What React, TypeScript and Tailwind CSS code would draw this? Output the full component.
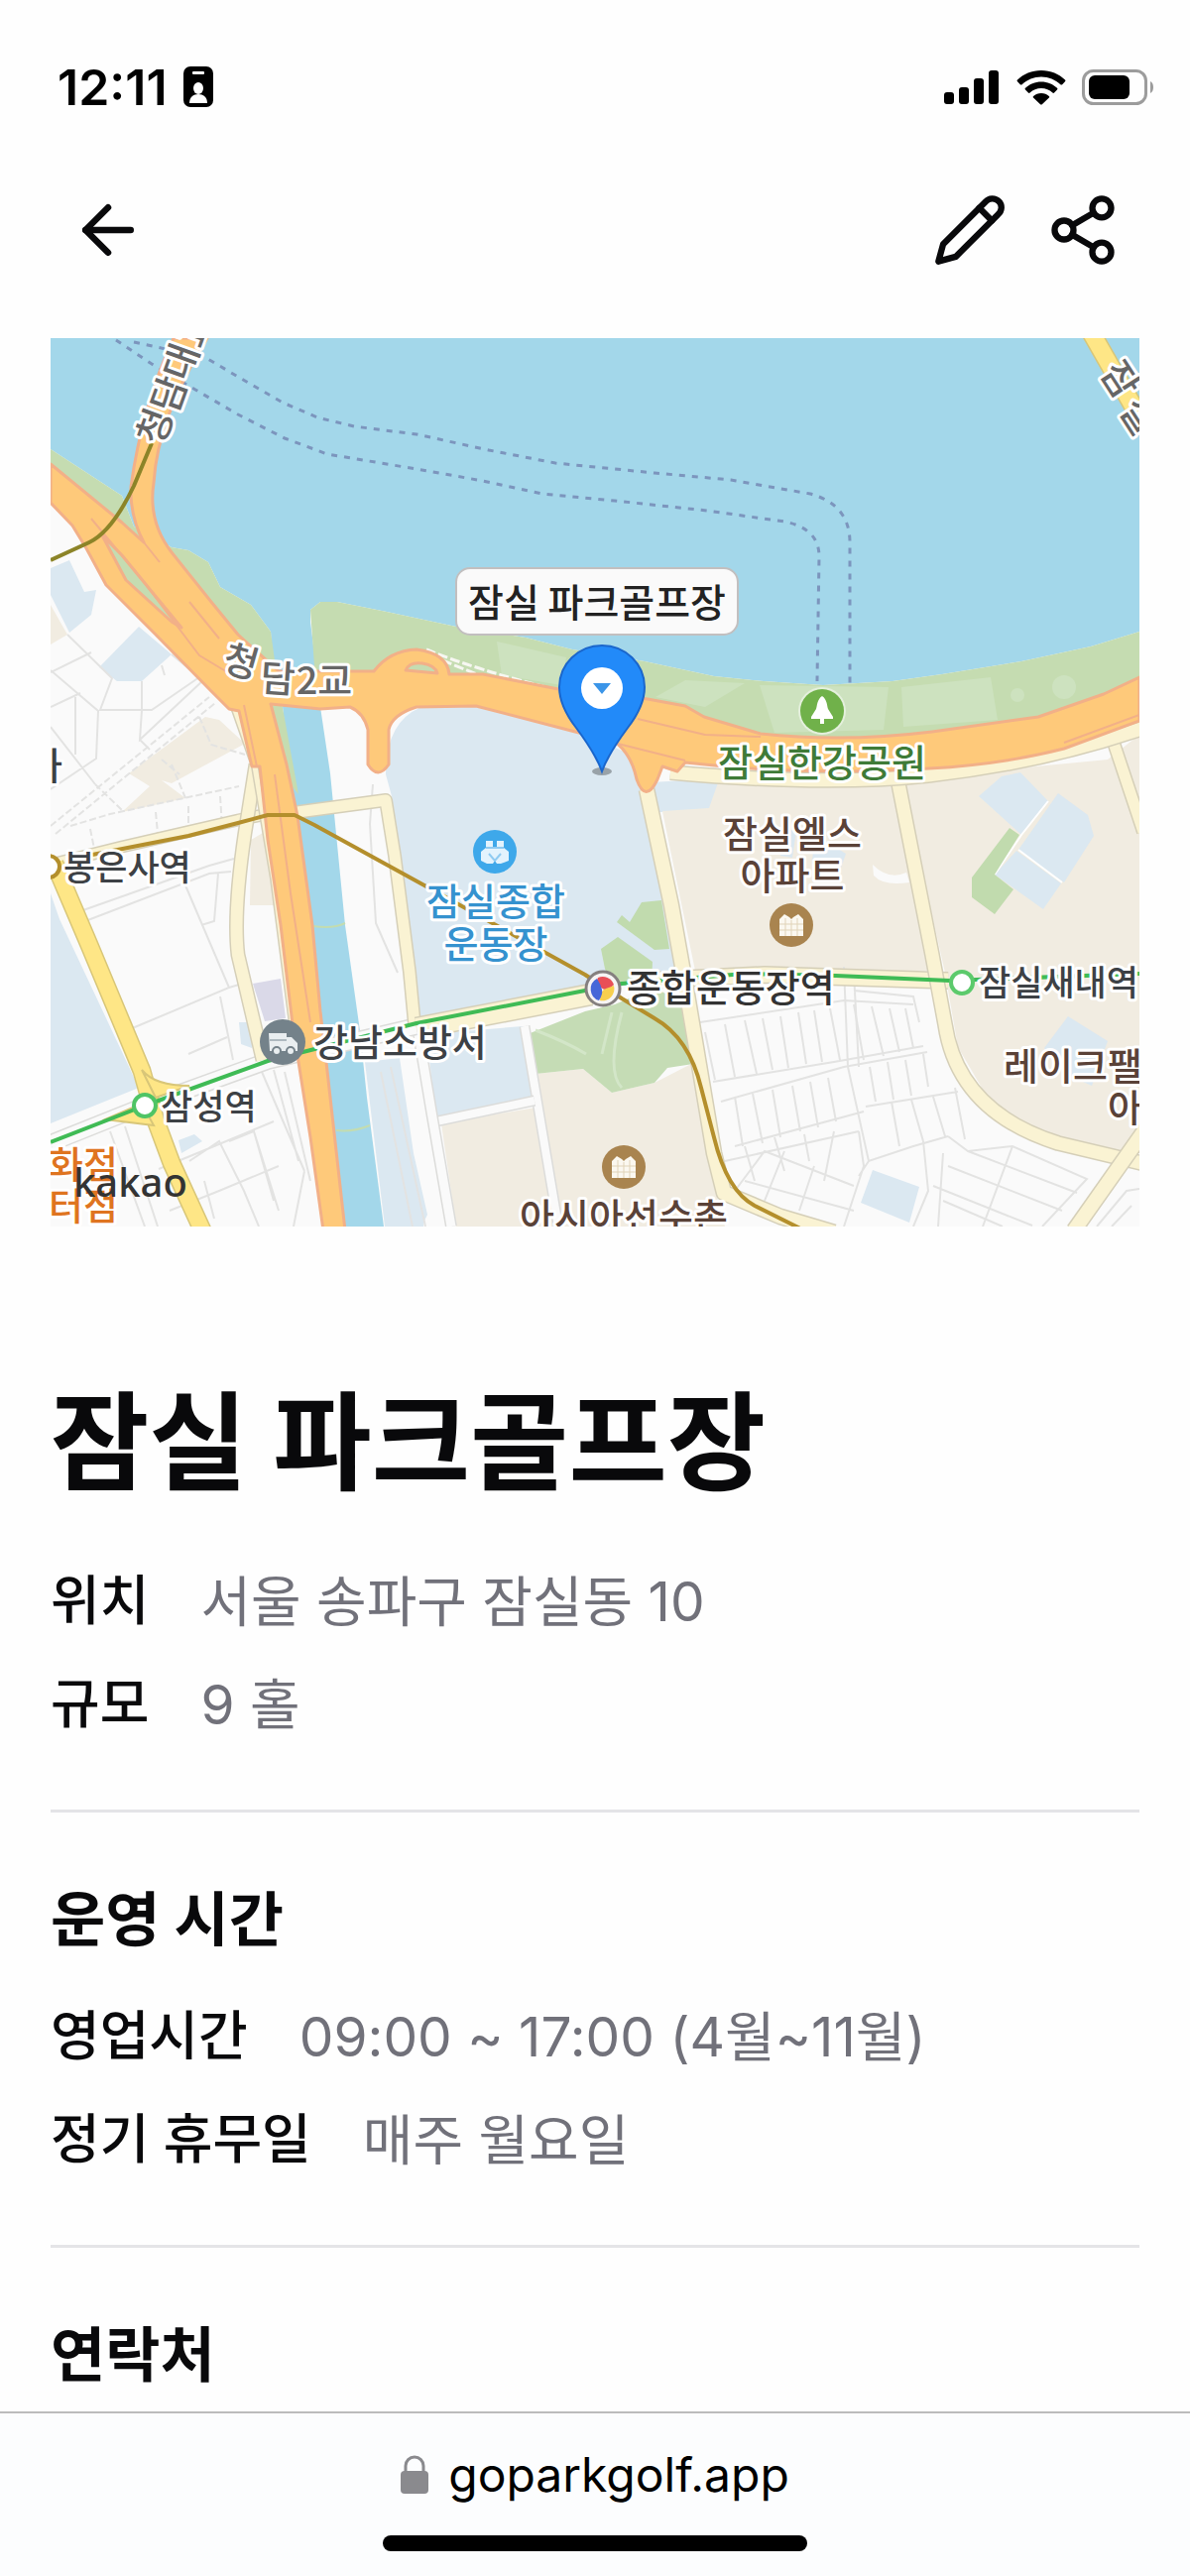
import React from 'react';
import { ArrowLeft, Pencil, Share2 } from 'lucide-react';

type InfoItem = { label: string; value: string };

type LabelProps = {
  x: number;
  y: number;
  size?: number;
  color?: string;
  anchor?: 'start' | 'middle' | 'end';
  rotate?: number;
  children: string;
};

const basicInfo: InfoItem[] = [
  { label: '위치', value: '서울 송파구 잠실동 10' },
  { label: '규모', value: '9 홀' },
];

const hoursInfo: InfoItem[] = [
  { label: '영업시간', value: '09:00 ~ 17:00 (4월~11월)' },
  { label: '정기 휴무일', value: '매주 월요일' },
];

const StatusBar: React.FC = () => (
  <div className="flex items-center justify-between pt-[58px] pl-[58px] pr-[34px]">
    <div className="flex items-center gap-4">
      <span className="text-[50px] leading-[60px] font-semibold text-black">12:11</span>
      <svg width="30" height="42" viewBox="0 0 30 42" aria-hidden="true">
        <rect width="30" height="41" rx="7" fill="#000" />
        <rect x="9" y="5" width="12" height="3" rx="1" fill="#fff" />
        <ellipse cx="15" cy="22" rx="5" ry="6" fill="#fff" />
        <path d="M6 37c0-6 4-9 9-9s9 3 9 9z" fill="#fff" />
      </svg>
    </div>
    <div className="flex items-center gap-4">
      <svg width="58" height="36" viewBox="0 0 58 36" aria-hidden="true">
        <rect x="1" y="23" width="10" height="12" rx="3" />
        <rect x="16" y="18" width="10" height="17" rx="3" />
        <rect x="31" y="9" width="10" height="26" rx="3" />
        <rect x="46" y="1" width="10" height="34" rx="3" />
      </svg>
      <svg width="50" height="36" viewBox="0 0 50 36" aria-hidden="true">
        <path d="M25 1C15.500 1 7 4.700 1 10.500c-.6.6-.6 1.200 0 1.800l2.800 2.900c.5.5 1.200.5 1.800 0C10.800 10.400 17.500 7.500 25 7.500s14.200 2.900 19.400 7.700c.6.500 1.300.5 1.800 0l2.800-2.900c.6-.6.6-1.200 0-1.800C43 4.700 34.500 1 25 1z" />
        <path d="M25 12.500c-6.200 0-11.900 2.400-16 6.300-.6.6-.6 1.200 0 1.800l2.900 2.900c.5.500 1.200.5 1.700 0 3-2.800 7-4.500 11.400-4.500s8.400 1.700 11.400 4.500c.5.5 1.200.5 1.700 0l2.900-2.900c.6-.6.6-1.200 0-1.800-4.100-3.900-9.800-6.300-16-6.300z" />
        <path d="M25 24c-3.100 0-5.800 1.100-7.900 2.900-.6.500-.6 1.200-.1 1.700l7.100 6.600c.5.5 1.200.5 1.700 0l7.100-6.600c.5-.5.5-1.200-.1-1.700C30.800 25.100 28.100 24 25 24z" />
      </svg>
      <svg width="75" height="38" viewBox="0 0 75 38" aria-hidden="true">
        <rect x="1.500" y="2.500" width="63" height="33" rx="10" fill="none" stroke="#9c9c9c" strokeWidth="3" />
        <rect x="7" y="7" width="41" height="24" rx="6" />
        <path d="M69 13c4 1.500 4 10.500 0 12z" fill="#9c9c9c" />
      </svg>
    </div>
  </div>
);

const Header: React.FC = () => (
  <header className="flex items-center justify-between px-[70px] pt-[75px] pb-[70px] text-[#09090b]">
    <button type="button" aria-label="뒤로 가기">
      <ArrowLeft size={78} strokeWidth={2} />
    </button>
    <div className="flex gap-[38px]">
      <button type="button" aria-label="수정">
        <svg
          width="76"
          height="78"
          viewBox="0 0 24 24"
          fill="none"
          stroke="currentColor"
          strokeWidth="2"
          strokeLinecap="round"
          strokeLinejoin="round"
        >
          <path d="M17 3a2.850 2.830 0 1 1 4 4L7.500 20.500 2 22l1.500-5.500Z" />
          <path d="m15 5 4 4" />
        </svg>
      </button>
      <button type="button" aria-label="공유">
        <Share2 size={76} strokeWidth={2} />
      </button>
    </div>
  </header>
);

const MapLabel: React.FC<LabelProps> = ({
  x,
  y,
  size = 38,
  color = '#3d4145',
  anchor = 'start',
  rotate = 0,
  children,
}) => (
  <text
    x={x}
    y={y}
    fontSize={size}
    fill={color}
    textAnchor={anchor}
    stroke="#fff"
    strokeWidth="6"
    strokeLinejoin="round"
    paintOrder="stroke"
    transform={rotate ? `rotate(${rotate} ${x} ${y - 13})` : undefined}
  >
    {children}
  </text>
);

// a road is its darker casing with the fill colour on top
const Road: React.FC<{ d: string; width: number; fill: string; edge: string }> = ({ d, width, fill, edge }) => (
  <g fill="none" strokeLinejoin="round">
    <path d={d} stroke={edge} strokeWidth={width + 3} />
    <path d={d} stroke={fill} strokeWidth={width} />
  </g>
);

const ApartmentIcon: React.FC<{ x: number; y: number }> = ({ x, y }) => (
  <g transform={`translate(${x} ${y})`}>
    <circle r="22" fill="#a9844f" />
    <path d="M-12-6l5-5 5 3 2 2 2-2 5-3 5 5v17h-24z" fill="#fbf8f0" />
    <path d="M0-5v16M-12-1h24M-12 5h24M-6-7v18M6-7v18" stroke="#e0d3b8" strokeWidth="1" />
  </g>
);

const cream = { fill: '#faf3d3', edge: '#d5cfb8' };
const white = { fill: '#fafafa', edge: '#dcdcda' };
const yellow = { fill: '#fee686', edge: '#d8c678' };

const CourseMap: React.FC = () => (
  <svg
    viewBox="0 0 1098 896"
    className="block h-auto w-full font-['Noto_Sans_CJK_KR',sans-serif] font-medium"
    role="img"
    aria-label="잠실 파크골프장 지도"
  >
    <rect width="1098" height="896" fill="#fafafa" />

    {/* blocks */}
    <g fill="#dbe8f1">
      <path d="M338 440Q338 382 380 370L429 368 529 395 585 420 602 460 644 645 540 658 370 690 344 462Z" />
      <path d="M379 702L476 694 486 766 389 786Z" />
      <path d="M317 730L352 726 366 822 380 884 374 896H337Z" />
      <path d="M606 448L676 444 666 478 612 478Z" />
      <path d="M0 232L19 224 34 256 46 254 41 279 19 297 0 259Z" />
      <path d="M89 291L122 319 92 346H67L49 332Z" />
      <path d="M0 560L9 586 89 756 0 792Z" />
      <path d="M190 690H203V716L192 712Z" />
      <path d="M129 809L145 803 153 810 132 822Z" />
      <path d="M829 839L876 856 866 892 817 872Z" />
      <path d="M369 858L378 876 376 896H369Z" />
    </g>
    <g fill="#f1ece1">
      <path d="M394 792L489 776 506 869V896H409Z" />
      <path d="M489 742L537 737 566 761 609 751 646 732 671 862 680 896H512Z" />
      <path d="M617 477L664 474 676 440 850 445 892 638H650Z" />
      <path d="M858 445L1066 425 1098 400V805L1080 820 1010 812 950 775 915 715 902 640Z" />
      <path d="M0 269L17 299 0 309Z" />
      <path d="M79 439L156 382 170 385 196 409 122 449 112 446 136 464 72 478 100 452Z" />
      <path d="M202 506L214 499 230 572H201Z" />
    </g>
    <g fill="#dbe8f1">
      <path d="M959 442L978 438 1006 467 979 501 936 462Z" />
      <path d="M1016 459L1046 481 1052 502 1022 549 976 516Z" />
      <path d="M974 517L1019 550 1001 576 952 541Z" />
      <path d="M1026 684L1066 709 1050 754 1030 745 1002 716Z" />
      <path d="M770 500L802 520 795 540 768 530ZM738 495L752 497 748 524 736 522Z" />
    </g>
    <path d="M979 501L1006 467M976 516L1020 549M979 501L952 541" stroke="#fff" strokeWidth="2" />
    <path d="M829 531Q845 547 863 539L866 549Q840 553 830 542Z" fill="#fafafa" />
    <path d="M204 651L232 646 237 686 216 689Z" fill="#dad9e8" />
    <path d="M967 494L977 501 952 541 971 556 952 581 929 564V544Z" fill="#c1dbae" />

    {/* small streets */}
    <g fill="none" stroke="#e3e3e2" strokeWidth="2">
      <path d="M17 299L62 343 50 375 102 375 150 342 122 319M0 337L41 317M0 335L48 376 46 424 0 455M25 362V420M92 346V375L90 405 170 330M90 405L100 415M0 392L45 450M0 372L30 358M112 330L115 340M150 342L170 355" />
      <path d="M0 492L160 362M5 500L166 368M150 382L162 410 196 420M122 430L136 464M20 492L60 480 190 452M45 450L72 476M106 478L109 510M139 472V500M171 462L173 492M40 495L45 520M112 425L130 440" strokeDasharray="7 3" />
      <path d="M30 578L160 532 185 525M35 588L160 540 182 538M169 540L165 588 152 592M136 552L180 655 80 697M171 664L184 728M139 722L178 705M180 655L190 652" />
      <path d="M60 800L95 896M75 795L108 896M109 838L165 815 225 790M140 830L170 810 195 860 210 896M180 810L205 800 225 870M120 880L170 860 230 835M155 850L165 888M205 800L230 880" />
      <path d="M213 740L256 840M225 738L250 830M236 740L262 850M256 840L245 896M325 450L322 490 328 590 350 640M333 740L365 896M343 735L378 896" />
      <path d="M655 690L800 668 870 672M668 750L790 730 880 714M676 770L800 735 884 720M660 700L670 748M680 692L690 745M700 688L712 742M718 686L728 738M736 684L744 736M754 680L762 732M770 678L778 730M786 676L796 728M800 634L804 735M810 672L820 728M828 674L840 724M846 676L856 720M862 676L870 716" />
      <path d="M800 640H810L815 735M810 658L870 664 876 690M690 765L698 815M708 762L718 812M728 758L736 806M748 754L756 800M766 750L774 796M784 746L792 790M690 815L820 780M822 775L915 760M804 735L825 830 870 815 905 805M826 735L832 770M844 730L850 768M862 728L868 764M880 722L885 755M848 770L856 815M868 768L880 810M890 765L902 805M912 756L922 808" />
      <path d="M680 830L815 800M700 815L710 850M730 806L740 840M760 803L765 830M790 800L780 850M815 800L820 835 800 896M700 850L810 880M740 820L720 870M770 835L755 880M690 860L720 820 810 855M825 830L815 845M880 810L885 860 870 896M905 805L925 820 970 815 1045 848 1000 896M905 835L1020 880M890 855L990 895M900 822L895 896M970 815L940 896M925 820L1035 862M900 870L960 896M1055 896L1085 860 1098 858M1070 896L1090 875" />
    </g>

    {/* parks */}
    <g fill="#c1dbae">
      <path d="M596 569L616 567 624 616 609 617 571 589 576 582 584 589Z" />
      <path d="M572 604L607 629 606 650 565 650 559 636 555 616Z" />
    </g>
    <path d="M481 702L539 679 569 672 609 655 640 672 648 732 622 736 609 751 566 761 537 737 489 742Z" fill="#c5dcb5" />
    <path d="M489 698Q520 710 540 722M566 680L556 722M576 680Q560 740 576 756" stroke="#d3e6c8" strokeWidth="3" fill="none" />

    {/* river and the stream */}
    <path
      d="M0 0H1098V296L1049 311 979 326 899 339 849 346 779 350 719 346 669 341 599 326 526 314 479 302 409 291 339 276 289 266 272 266 262 274V286L267 326 272 372 282 439 297 592 312 699 319 766 336 896H290L270 700 234 372 225 340 222 296 202 269 171 251 159 226 139 214 122 211 84 190 72 159 0 112Z"
      fill="#a3d7ea"
    />
    <path d="M265 593Q285 596 297 590M288 799Q305 801 322 794" stroke="#c3dcb0" strokeWidth="2" fill="none" />
    <path
      d="M262 274L272 266H289L339 276 409 291 479 302 526 314 599 326 669 341 719 346 779 350 849 346 899 339 979 326 1049 311 1098 296V360L900 410 700 405 500 360 267 345Z"
      fill="#c5dcb1"
    />
    <g fill="#cde2bf">
      <path d="M450 306L520 322 515 350 455 340ZM640 345L700 348 660 372 610 362ZM715 350L845 352 840 395 730 398ZM858 352L948 342 955 385 860 392Z" />
      <circle cx="1022" cy="352" r="12" />
      <circle cx="975" cy="360" r="7" />
    </g>
    <path d="M379 314Q430 335 512 355M395 325L430 339" stroke="#f7f7f2" strokeWidth="3" strokeDasharray="10 3" fill="none" />
    <path d="M0 112L72 159 84 190 122 211 139 214 159 226 171 251 202 269 222 296 228 340 250 460 200 400 140 320 30 160 0 140Z" fill="#c5dcb1" />
    <path d="M279 739L297 896H290L272 760Z" fill="#c5dcb1" />

    {/* ferry routes */}
    <g fill="none" stroke="#7c95bd" strokeWidth="3" strokeDasharray="6 7">
      <path d="M84 4L157 20 189 39 234 65 269 80 306 89 369 97 442 113 509 126 609 136 686 143 766 157Q806 168 806 206V352" />
      <path d="M66 2L102 26 146 52 189 77 236 101 279 117 369 132 436 144 496 157 569 164 662 174 740 185Q775 192 775 220L773 346" />
    </g>

    {/* local roads */}
    <Road d="M478 694L512 896" width={8} {...white} />
    <Road d="M389 790L488 769" width={8} {...white} />
    <Road d="M370 696L384 780 404 896" width={9} {...white} />
    <Road d="M0 812L95 774 219 729 369 694" width={15} {...white} />
    <Road d="M0 531L72 513 189 486 219 480" width={10} {...cream} />
    <Road d="M207 430L196 499Q184 580 189 622L214 728" width={12} {...cream} />
    <Road d="M186 375L206 432 225 545 245 700" width={5} {...cream} />
    <Road d="M249 478L338 466 347 522 362 639 367 692" width={11} {...cream} />
    <Road d="M369 696L545 662" width={20} {...cream} />
    <Road d="M600 648L720 642 905 648" width={15} {...cream} />
    <Road d="M854 444L889 622 902 692Q915 780 1016 812L1100 832" width={13} {...cream} />
    <Road d="M1104 798L1032 900" width={14} {...cream} />
    <Road d="M1072 408L1102 498" width={11} {...cream} />
    <Road d="M601 455L626 572 641 656 669 822 679 862 736 886 790 902" width={14} {...cream} />
    <Road d="M625 438Q780 452 885 441 1000 428 1100 394" width={13} {...cream} />
    <Road d="M4 530L39 612 92 739 106 789 122 832 155 904" width={16} {...yellow} />
    <path d="M92 738Q105 754 140 754L106 766ZM55 788L104 794 92 772Z" fill="#fee686" stroke="#d8c678" strokeWidth="2" />
    <Road d="M1048 -8L1104 90" width={17} {...yellow} />

    {/* expressways */}
    <g fill="#fec97a" stroke="#f2b088" strokeWidth="3" strokeLinejoin="round">
      <path d="M124 0Q92 70 81 150 80 180 94 206L72 186 39 159 0 127V166L22 189 36 212 56 249 106 299 162 356 180 374 190 376 203 432H211L219 506 232 592 244 692 262 806 275 900H297L279 739 272 679 264 592 249 482 238 430 222 369 272 374 302 372Q316 378 320 395V430Q330 446 341 430V395Q344 380 369 372L429 371 529 397 569 407Q586 420 591 445 600 470 612 445L617 432 632 437 640 428Q760 442 886 434 960 430 1022 414L1098 386V342L1062 359 996 382 889 397Q800 408 716 399L659 382 640 371 602 364 512 354 436 339H402Q400 318 369 314 342 315 326 336L230 336 189 299 162 266 122 216Q98 185 104 146 108 80 158 0Z" />
      <path d="M358 335Q362 326 375 328 388 330 390 338Z" fill="#c5dcb1" />
      <path d="M52 199L72 219 99 252 132 292 122 286 76 244Z" fill="#c5dcb1" />
      <path
        d="M41 182L94 246 150 320 180 338M140 266L170 303M94 206L110 226M195 370L208 432M226 440L242 560 262 690M592 384L660 400 716 402M560 406L640 426M1098 380L1022 408"
        fill="none"
        strokeWidth="2"
      />
    </g>

    {/* subway lines */}
    <g fill="none" strokeLinejoin="round">
      <path d="M102 106L84 149Q62 195 39 206L0 224" stroke="#8c8428" strokeWidth="4" />
      <path
        d="M42 521L139 502 189 489 219 481H246L266 491 377 552 539 642 576 666 609 686Q644 706 656 756L669 806Q682 860 710 875L756 898"
        stroke="#b48f2c"
        strokeWidth="4"
      />
      <path d="M0 811L95 774 219 729 369 691 539 658 576 651 700 641 792 643 907 648 1098 641" stroke="#3fbb55" strokeWidth="4" />
      <circle cx="95" cy="774" r="11" fill="#fff" stroke="#4fc465" strokeWidth="4" />
      <circle cx="919" cy="650" r="11" fill="#fff" stroke="#5cca6c" strokeWidth="4" />
      <circle cx="-2" cy="533" r="11" fill="#fff" stroke="#b48f2c" strokeWidth="4" />
    </g>
    <g transform="translate(557 656)">
      <circle r="17" fill="#f6f4f4" stroke="#85807f" strokeWidth="3" />
      <path d="M-5-11A12 12 0 0 1 11-4Q4 4-2-1T-5-11Z" fill="#e84f57" />
      <path d="M11-3A12 12 0 0 1-3 12Q-3 2 3 0T11-3Z" fill="#f8cf4e" />
      <path d="M-6-10A12 12 0 0 0-4 12Q0 6-1 1T-6-10Z" fill="#4667d8" />
    </g>

    {/* place icons */}
    <g transform="translate(778 376)">
      <circle r="24" fill="#e4f0dc" />
      <circle r="22" fill="#70b14a" />
      <path d="M0-15c5 3 5 10 6 13l5 8v2H2v5h-4V8h-9V6l5-8c1-3 1-10 6-13z" fill="#fff" />
    </g>
    <g transform="translate(448 518)">
      <circle r="22" fill="#3ea8ea" />
      <path d="M-9-11h7v7h4v-7h7v7l5 4v9l-8 3H2l-2-3-2 3h-6l-6-3V0l5-4z" fill="#e3f3fd" />
      <path d="M-9-4H9M-6 2L0 9 6 2" stroke="#8fcbf2" strokeWidth="2" fill="none" />
    </g>
    <g transform="translate(234 710)">
      <circle r="23" fill="#74828a" />
      <path d="M-14-9H4v4h5l6 6v8h-28z" fill="#e9eef0" />
      <circle cx="-6" cy="9" r="4" fill="#e9eef0" stroke="#74828a" strokeWidth="2" />
      <circle cx="8" cy="9" r="4" fill="#e9eef0" stroke="#74828a" strokeWidth="2" />
      <path d="M-13-2H4" stroke="#aeb9bf" strokeWidth="2" />
    </g>
    <ApartmentIcon x={747} y={592} />
    <ApartmentIcon x={578} y={836} />

    {/* place names */}
    <MapLabel x={106} y={102} color="#666" anchor="middle" rotate={-70}>청</MapLabel>
    <MapLabel x={120} y={70} color="#666" anchor="middle" rotate={-70}>담</MapLabel>
    <MapLabel x={132} y={37} color="#666" anchor="middle" rotate={-70}>대</MapLabel>
    <MapLabel x={146} y={4} color="#666" anchor="middle" rotate={-70}>교</MapLabel>
    <MapLabel x={1078} y={55} color="#666" anchor="middle" rotate={57}>잠</MapLabel>
    <MapLabel x={1097} y={92} color="#666" anchor="middle" rotate={57}>실</MapLabel>
    <MapLabel x={192} y={340} color="#666" anchor="middle" rotate={16}>청</MapLabel>
    <MapLabel x={229} y={357} color="#666" anchor="middle" rotate={4}>담</MapLabel>
    <MapLabel x={276} y={359} color="#666" anchor="middle">2교</MapLabel>
    <MapLabel x={12} y={445} anchor="end">사</MapLabel>
    <MapLabel x={13} y={547} size={35}>봉은사역</MapLabel>
    <MapLabel x={265} y={724}>강남소방서</MapLabel>
    <MapLabel x={111} y={788} size={35}>삼성역</MapLabel>
    <MapLabel x={68} y={847} color="#df7420" anchor="end">화점</MapLabel>
    <MapLabel x={68} y={889} color="#df7420" anchor="end">터점</MapLabel>
    <MapLabel x={449} y={582} color="#3592cf" anchor="middle">잠실종합</MapLabel>
    <MapLabel x={449} y={625} color="#3592cf" anchor="middle">운동장</MapLabel>
    <MapLabel x={581} y={669} color="#333">종합운동장역</MapLabel>
    <MapLabel x={936} y={663} size={35}>잠실새내역</MapLabel>
    <MapLabel x={778} y={442} color="#3f7b38" anchor="middle">잠실한강공원</MapLabel>
    <MapLabel x={748} y={514} color="#5a4238" anchor="middle">잠실엘스</MapLabel>
    <MapLabel x={748} y={556} color="#5a4238" anchor="middle">아파트</MapLabel>
    <MapLabel x={961} y={748} color="#5a4238">레이크팰</MapLabel>
    <MapLabel x={1066} y={790} color="#5a4238">아</MapLabel>
    <MapLabel x={578} y={900} color="#5a4238" anchor="middle">아시아선수촌</MapLabel>
    <text x="23" y="866" fontSize="40" fill="#333" className="font-['Noto_Sans']">kakao</text>

    {/* marker */}
    <rect x="409" y="232" width="284" height="67" rx="14" fill="#fafafa" stroke="#c2bfbf" strokeWidth="2" />
    <text x="551" y="281" fontSize="39" fill="#222" textAnchor="middle">잠실 파크골프장</text>
    <ellipse cx="556" cy="437" rx="10" ry="4" fill="#000" opacity="0.3" />
    <path d="M556 437Q550 420 530 393 513 371 513 352A43 42 0 0 1 599 352Q599 371 582 393 562 420 556 437Z" fill="#228af9" stroke="#1a66cc" strokeWidth="2" />
    <circle cx="556" cy="353" r="21" fill="#fff" />
    <path d="M547 348H565L556 359Z" fill="#3b95e8" />
  </svg>
);

const InfoList: React.FC<{ items: InfoItem[] }> = ({ items }) => (
  <dl className="flex flex-col gap-6">
    {items.map(({ label, value }) => (
      <div key={label} className="flex gap-[52px] leading-[80px]">
        <dt className="text-[54px] font-medium text-[#09090b]">{label}</dt>
        <dd className="text-[55px] text-[#71717a]">{value}</dd>
      </div>
    ))}
  </dl>
);

const BrowserBar: React.FC = () => (
  <footer className="mt-auto flex flex-col items-center border-t-2 border-[#bcbcbc] bg-[#fcfdfe] pt-8 pb-[25px]">
    <div className="flex items-center gap-5">
      <svg width="28" height="40" viewBox="0 0 28 40" aria-hidden="true">
        <path d="M5 18V11a9 9 0 0 1 18 0v7" fill="none" stroke="#8a8a8e" strokeWidth="3" />
        <rect y="16" width="28" height="23" rx="4" fill="#8a8a8e" />
      </svg>
      <span className="text-[48px] leading-[60px] text-black">goparkgolf.app</span>
    </div>
    <div className="mt-[31px] h-4 w-[428px] rounded-full bg-black" />
  </footer>
);

const App: React.FC = () => {
  return (
    <div className="flex min-h-screen flex-col bg-[#fefefe] font-['Inter','Noto_Sans_CJK_KR',sans-serif]">
      <StatusBar />
      <Header />
      <main className="flex flex-col px-[51px]">
        <CourseMap />
        <h1 className="mt-[158px] text-[108px] leading-[120px] font-bold text-[#09090b]">잠실 파크골프장</h1>
        <div className="mt-[60px]">
          <InfoList items={basicInfo} />
        </div>
        <hr className="mt-[66px] border-t-[3px] border-[#e4e4e7]" />
        <section className="mt-[68px]">
          <h2 className="mb-[38px] text-[60px] leading-[80px] font-bold text-[#09090b]">운영 시간</h2>
          <InfoList items={hoursInfo} />
        </section>
        <hr className="mt-[66px] border-t-[3px] border-[#e4e4e7]" />
        <section className="mt-[68px]">
          <h2 className="text-[60px] leading-[80px] font-bold text-[#09090b]">연락처</h2>
        </section>
      </main>
      <BrowserBar />
    </div>
  );
};

export default App;
